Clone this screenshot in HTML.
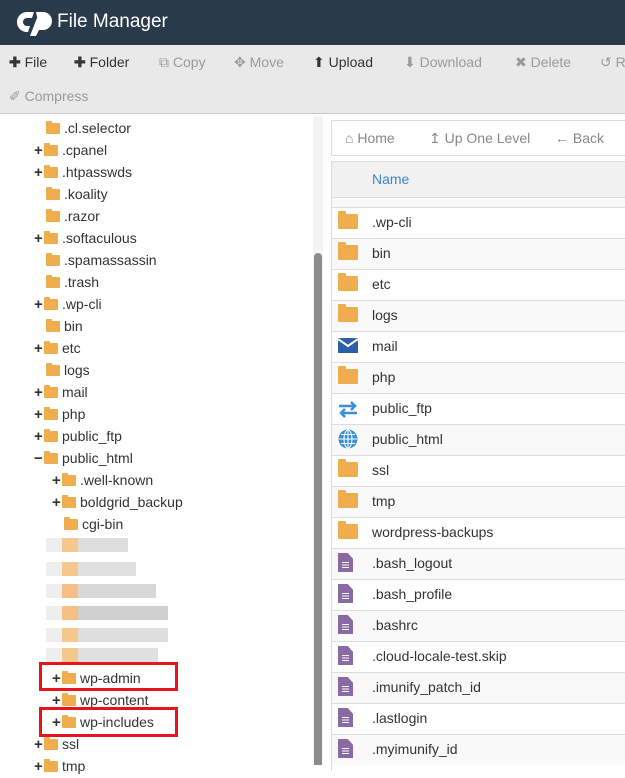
<!DOCTYPE html>
<html><head><meta charset="utf-8"><style>
*{margin:0;padding:0;box-sizing:border-box}
body{width:625px;height:765px;overflow:hidden;font-family:"Liberation Sans",sans-serif;background:#fff;position:relative;color:#333}
.hdr{position:absolute;left:0;top:0;width:625px;height:45px;background:#293a4a;color:#fff;font-size:19px}
.tb{position:absolute;left:0;top:45px;width:625px;height:69px;background:#e9e9e9;border-bottom:1px solid #ccc;font-size:14px}
.tb span{position:absolute;white-space:nowrap}
.g{color:#9a9a9a}
.tree{position:absolute;left:0;top:116px;width:312px;font-size:14px;color:#333}
.r{position:absolute;height:22px;line-height:22px;white-space:nowrap}
.f{display:inline-block;width:14px;height:11px;background:#f0ad4e;border-radius:1px;vertical-align:-1px;margin-right:4px;position:relative}
.f:before{content:"";position:absolute;left:0;top:-2px;width:6px;height:3px;background:#f0ad4e;border-radius:1px 1px 0 0}
.p{display:inline-block;width:10px;font-weight:bold;font-size:15px}
.sb{position:absolute;left:313px;top:116px;width:10px;height:649px;background:#f4f4f4}
.th{position:absolute;left:314px;top:253px;width:8px;height:512px;background:#8c8c8c;border-radius:4px 4px 0 0}
.nav{position:absolute;left:331px;top:120px;width:300px;height:36px;border:1px solid #ddd;font-size:14px;color:#888}
.nav span{position:absolute;top:9px;white-space:nowrap}
.tbl{position:absolute;left:331px;top:161px;width:300px;height:610px;border-left:1px solid #ddd;border-top:1px solid #ddd}
.thd{height:36px;background:#f1f1f1;border-bottom:1px solid #ddd;color:#3a87c8;font-size:14px;line-height:34px;padding-left:40px}
.row{position:absolute;left:0;width:300px;height:31px;border-top:1px solid #ddd;font-size:14px;line-height:28px;padding-left:40px}
.row i{position:absolute;left:6px;top:6px}
.rf{width:20px;height:15px;background:#f0ad4e;border-radius:1px}
.rf:before{content:"";position:absolute;left:0;top:-3px;width:8px;height:4px;background:#f0ad4e;border-radius:1px 1px 0 0}
.doc{width:15px;height:19px;background:#8a6aa5;clip-path:polygon(0 0,65% 0,100% 30%,100% 100%,0 100%);top:4px!important}
.doc:after{content:"";position:absolute;left:4px;top:9px;width:7px;height:6px;background:repeating-linear-gradient(#fff 0 1px,transparent 1px 2.5px)}
.red{position:absolute;border:3px solid #e8141b}
.bl{position:absolute;height:14px}
</style></head><body>
<div class="hdr">
<svg style="position:absolute;left:14px;top:8px" width="40" height="28" viewBox="0 0 40 28"><path d="M14 4h6l-2 6h-5a4 4 0 0 0 0 8h3l-2 6h-2A10 10 0 0 1 14 4z" fill="#fff"/><path d="M22 4h7a9 9 0 0 1 0 18h-4l-3 6h-6l7-18h5a3 3 0 0 1 0 6h-2l-1 2" fill="#fff"/></svg>
<span style="position:absolute;left:57px;top:11px">File Manager</span></div>
<div class="tb">
<span style="left:9px;top:9px"><b>✚</b> File</span>
<span style="left:74px;top:9px"><b>✚</b> Folder</span>
<span class="g" style="left:159px;top:9px">⧉ Copy</span>
<span class="g" style="left:234px;top:9px">✥ Move</span>
<span style="left:313px;top:9px">⬆ Upload</span>
<span class="g" style="left:404px;top:9px">⬇ Download</span>
<span class="g" style="left:515px;top:9px">✖ Delete</span>
<span class="g" style="left:600px;top:9px">↺ R</span>
<span class="g" style="left:9px;top:43px">✐ Compress</span>
</div>
<div class="tree">
<div class="r" style="left:46px;top:1px"><i class="f"></i>.cl.selector</div>
<div class="r" style="left:34px;top:23px"><b class="p">+</b><i class="f"></i>.cpanel</div>
<div class="r" style="left:34px;top:45px"><b class="p">+</b><i class="f"></i>.htpasswds</div>
<div class="r" style="left:46px;top:67px"><i class="f"></i>.koality</div>
<div class="r" style="left:46px;top:89px"><i class="f"></i>.razor</div>
<div class="r" style="left:34px;top:111px"><b class="p">+</b><i class="f"></i>.softaculous</div>
<div class="r" style="left:46px;top:133px"><i class="f"></i>.spamassassin</div>
<div class="r" style="left:46px;top:155px"><i class="f"></i>.trash</div>
<div class="r" style="left:34px;top:177px"><b class="p">+</b><i class="f"></i>.wp-cli</div>
<div class="r" style="left:46px;top:199px"><i class="f"></i>bin</div>
<div class="r" style="left:34px;top:221px"><b class="p">+</b><i class="f"></i>etc</div>
<div class="r" style="left:46px;top:243px"><i class="f"></i>logs</div>
<div class="r" style="left:34px;top:265px"><b class="p">+</b><i class="f"></i>mail</div>
<div class="r" style="left:34px;top:287px"><b class="p">+</b><i class="f"></i>php</div>
<div class="r" style="left:34px;top:309px"><b class="p">+</b><i class="f"></i>public_ftp</div>
<div class="r" style="left:34px;top:331px"><b class="p">−</b><i class="f"></i>public_html</div>
<div class="r" style="left:52px;top:353px"><b class="p">+</b><i class="f"></i>.well-known</div>
<div class="r" style="left:52px;top:375px"><b class="p">+</b><i class="f"></i>boldgrid_backup</div>
<div class="r" style="left:64px;top:397px"><i class="f"></i>cgi-bin</div>
<div class="bl" style="left:46px;top:422px;width:82px;background:linear-gradient(90deg,#eee 0 16px,#f5c98e 16px 32px,#ddd 32px)"></div>
<div class="bl" style="left:46px;top:446px;width:90px;background:linear-gradient(90deg,#eee 0 16px,#f5c98e 16px 32px,#e0e0e0 32px)"></div>
<div class="bl" style="left:46px;top:468px;width:110px;background:linear-gradient(90deg,#eee 0 16px,#f6c083 16px 32px,#d8d8d8 32px)"></div>
<div class="bl" style="left:46px;top:490px;width:122px;background:linear-gradient(90deg,#eee 0 16px,#f6c083 16px 32px,#d0d0d0 32px)"></div>
<div class="bl" style="left:46px;top:512px;width:122px;background:linear-gradient(90deg,#eee 0 16px,#f5c98e 16px 32px,#ddd 32px)"></div>
<div class="bl" style="left:46px;top:532px;width:112px;background:linear-gradient(90deg,#eee 0 16px,#f5c98e 16px 32px,#e0e0e0 32px)"></div>
<div class="r" style="left:52px;top:551px"><b class="p">+</b><i class="f"></i>wp-admin</div>
<div class="r" style="left:52px;top:573px"><b class="p">+</b><i class="f"></i>wp-content</div>
<div class="r" style="left:52px;top:595px"><b class="p">+</b><i class="f"></i>wp-includes</div>
<div class="r" style="left:34px;top:617px"><b class="p">+</b><i class="f"></i>ssl</div>
<div class="r" style="left:34px;top:639px"><b class="p">+</b><i class="f"></i>tmp</div>
</div>
<div class="red" style="left:39px;top:662px;width:139px;height:29px"></div>
<div class="red" style="left:39px;top:707px;width:139px;height:30px"></div>
<div class="sb"></div><div class="th"></div>
<div class="nav"><span style="left:13px">⌂ Home</span><span style="left:97px">↥ Up One Level</span><span style="left:223px">← Back</span></div>
<div class="tbl"><div class="thd">Name</div>
<div class="row" style="top:35px;height:10px;background:#f9f9f9"></div>
<div class="row" style="top:45px"><i class="rf"></i>.wp-cli</div>
<div class="row" style="top:76px;background:#f9f9f9"><i class="rf"></i>bin</div>
<div class="row" style="top:107px"><i class="rf"></i>etc</div>
<div class="row" style="top:138px;background:#f9f9f9"><i class="rf"></i>logs</div>
<div class="row" style="top:169px"><i style="width:20px;height:15px;background:#2d5ea8"><svg width="20" height="15" style="display:block"><path d="M0 1l10 7 10-7" stroke="#fff" stroke-width="2" fill="none"/></svg></i>mail</div>
<div class="row" style="top:200px;background:#f9f9f9"><i class="rf"></i>php</div>
<div class="row" style="top:231px"><i style="top:5px"><svg width="20" height="18"><path d="M1 6h16M13 2l4 4-4 4M19 13H3M7 9l-4 4 4 4" stroke="#3a8fd8" stroke-width="2.5" fill="none"/></svg></i>public_ftp</div>
<div class="row" style="top:262px;background:#f9f9f9"><i style="top:4px"><svg width="20" height="20"><circle cx="10" cy="10" r="9.5" fill="#3a8fd8"/><path d="M1 10h18M10 1v18M3 5.5h14M3 14.5h14" stroke="#fff" stroke-width="1"/><ellipse cx="10" cy="10" rx="4" ry="9" stroke="#fff" fill="none"/></svg></i>public_html</div>
<div class="row" style="top:293px"><i class="rf"></i>ssl</div>
<div class="row" style="top:324px;background:#f9f9f9"><i class="rf"></i>tmp</div>
<div class="row" style="top:355px"><i class="rf"></i>wordpress-backups</div>
<div class="row" style="top:386px;background:#f9f9f9"><i class="doc"></i>.bash_logout</div>
<div class="row" style="top:417px"><i class="doc"></i>.bash_profile</div>
<div class="row" style="top:448px;background:#f9f9f9"><i class="doc"></i>.bashrc</div>
<div class="row" style="top:479px"><i class="doc"></i>.cloud-locale-test.skip</div>
<div class="row" style="top:510px;background:#f9f9f9"><i class="doc"></i>.imunify_patch_id</div>
<div class="row" style="top:541px"><i class="doc"></i>.lastlogin</div>
<div class="row" style="top:572px;background:#f9f9f9"><i class="doc"></i>.myimunify_id</div>
</div>
</body></html>
